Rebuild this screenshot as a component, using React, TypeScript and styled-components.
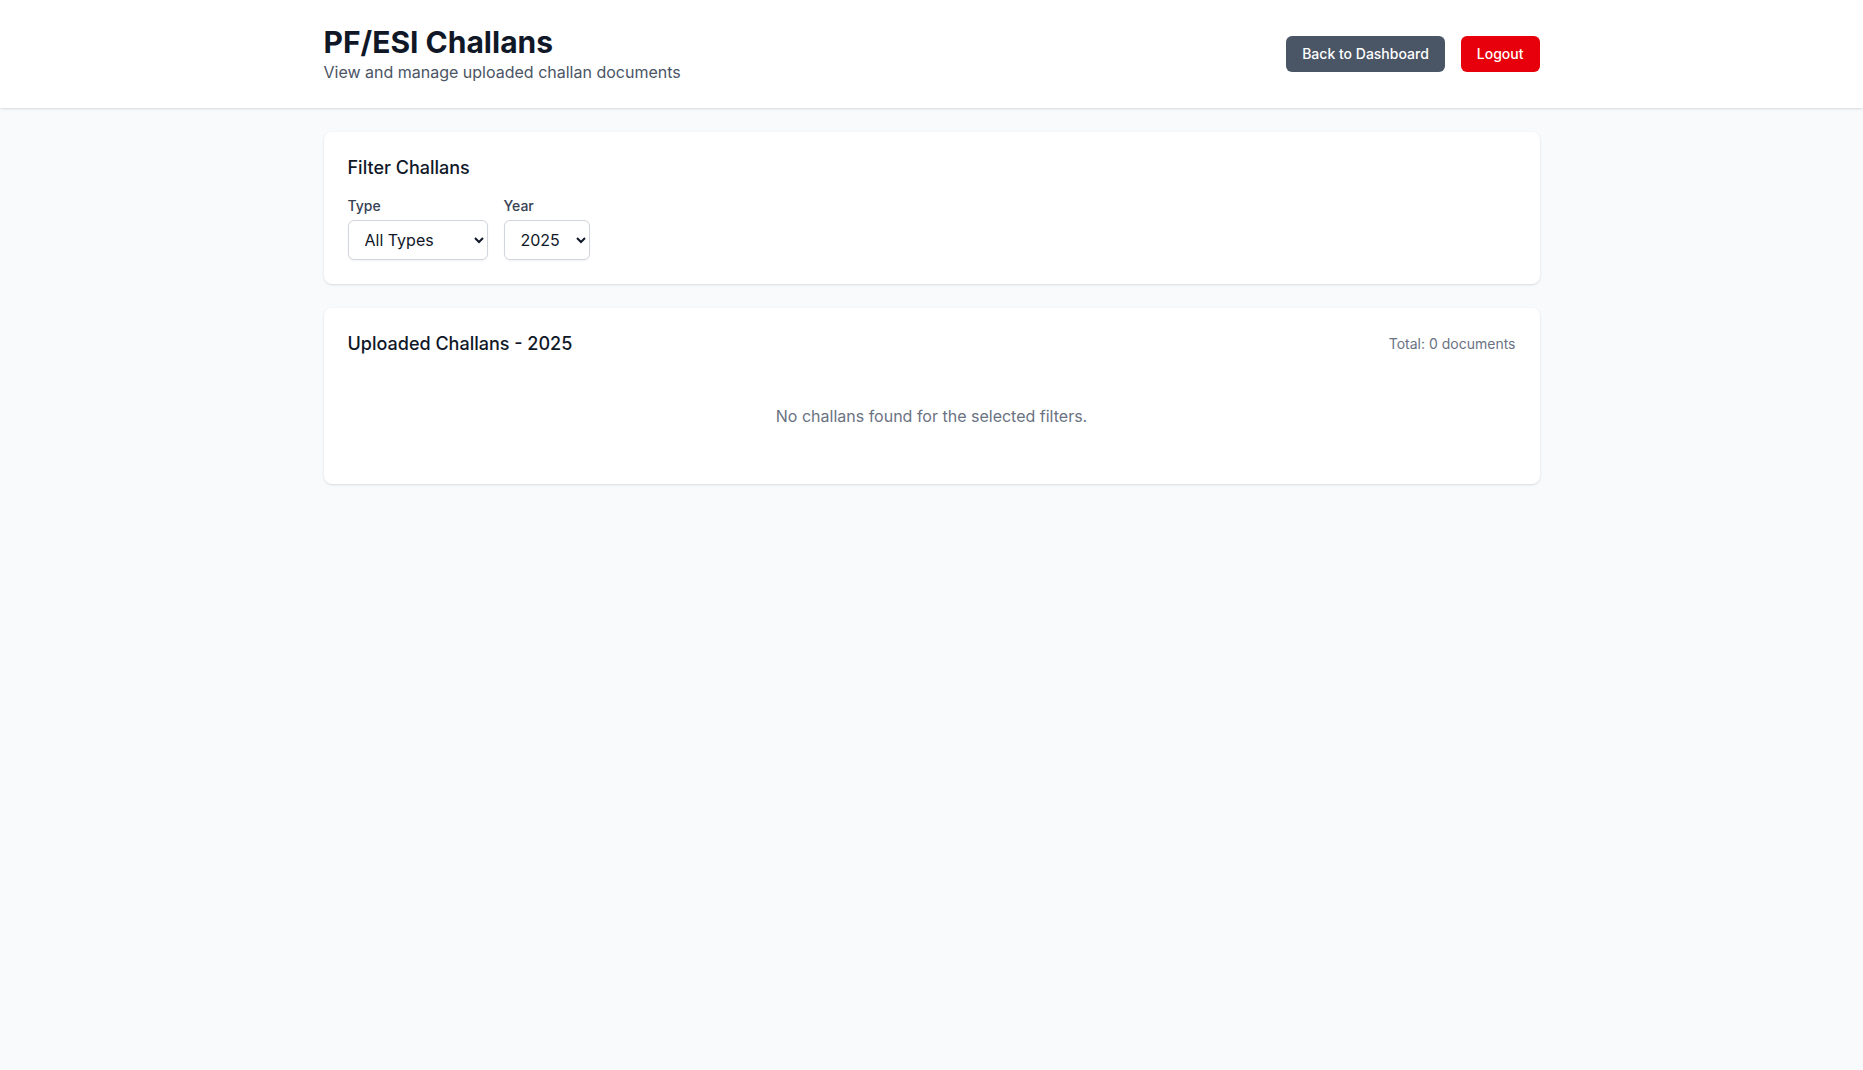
import React from "react";
import styled, { createGlobalStyle } from "styled-components";

const GlobalStyle = createGlobalStyle`
  * { box-sizing: border-box; }
  html, body { margin: 0; padding: 0; }
  body {
    background: #f9fafb;
    font-family: Inter, "Noto Sans", sans-serif;
    color: #101828;
    min-height: 100vh;
  }
`;

const Page = styled.div`
  min-height: 100vh;
  background: #f9fafb;
`;

const Header = styled.header`
  background: #ffffff;
  box-shadow: 0 1px 3px 0 rgba(0, 0, 0, 0.1), 0 1px 2px -1px rgba(0, 0, 0, 0.1);
`;

const Container = styled.div`
  max-width: 1280px;
  margin: 0 auto;
  padding: 0 32px;
`;

const HeaderInner = styled(Container)`
  display: flex;
  align-items: center;
  justify-content: space-between;
  padding-top: 24px;
  padding-bottom: 24px;
`;

const Title = styled.h1`
  margin: 0;
  font-size: 30px;
  line-height: 36px;
  font-weight: 700;
  color: #101828;
`;

const Subtitle = styled.p`
  margin: 0;
  font-size: 16px;
  line-height: 24px;
  color: #4a5565;
`;

const Actions = styled.div`
  display: flex;
  gap: 16px;
`;

const Button = styled.button<{ $variant: "gray" | "red" }>`
  height: 36px;
  padding: 0 16px 1px;
  border: none;
  border-radius: 6px;
  font-family: inherit;
  font-size: 14px;
  line-height: 20px;
  font-weight: 500;
  color: #ffffff;
  cursor: pointer;
  background: ${(p) => (p.$variant === "red" ? "#e7000b" : "#4a5565")};
`;

const Main = styled(Container)`
  padding-top: 24px;
  padding-bottom: 24px;
  display: flex;
  flex-direction: column;
  gap: 24px;
`;

const Card = styled.section`
  background: #ffffff;
  border-radius: 8px;
  box-shadow: 0 1px 3px 0 rgba(0, 0, 0, 0.1), 0 1px 2px -1px rgba(0, 0, 0, 0.1);
  padding: 24px;
`;

const CardTitle = styled.h2<{ $mb?: number }>`
  margin: 0 0 ${(p) => p.$mb ?? 16}px 0;
  font-size: 18px;
  line-height: 24px;
  font-weight: 500;
  color: #101828;
`;

const FilterRow = styled.div`
  display: flex;
  gap: 16px;
`;

const Field = styled.div`
  display: flex;
  flex-direction: column;
  gap: 4px;
`;

const Label = styled.label`
  font-size: 14px;
  line-height: 20px;
  font-weight: 500;
  color: #364153;
`;

const Select = styled.select<{ $width: number }>`
  width: ${(p) => p.$width}px;
  height: 40px;
  padding: 0 8px 0 12px;
  border: 1px solid #d1d5dc;
  border-radius: 6px;
  background: #ffffff;
  font-family: inherit;
  font-size: 16px;
  color: #101828;
  box-shadow: 0 1px 2px 0 rgba(0, 0, 0, 0.05);
`;

const CardHead = styled.div`
  display: flex;
  align-items: center;
  justify-content: space-between;
  margin-bottom: 16px;
`;

const Total = styled.span`
  font-size: 14px;
  line-height: 20px;
  color: #6a7282;
`;

const Empty = styled.p`
  margin: 0;
  padding: 32px 0;
  text-align: center;
  font-size: 16px;
  line-height: 24px;
  color: #6a7282;
`;

export default function App() {
  return (
    <Page>
      <GlobalStyle />
      <Header>
        <HeaderInner>
          <div>
            <Title>PF/ESI Challans</Title>
            <Subtitle>View and manage uploaded challan documents</Subtitle>
          </div>
          <Actions>
            <Button $variant="gray">Back to Dashboard</Button>
            <Button $variant="red">Logout</Button>
          </Actions>
        </HeaderInner>
      </Header>
      <Main as="main">
        <Card>
          <CardTitle>Filter Challans</CardTitle>
          <FilterRow>
            <Field>
              <Label>Type</Label>
              <Select defaultValue="all" $width={140}>
                <option value="all">All Types</option>
                <option value="pf">PF</option>
                <option value="esi">ESI</option>
              </Select>
            </Field>
            <Field>
              <Label>Year</Label>
              <Select defaultValue="2025" $width={86}>
                <option value="2025">2025</option>
                <option value="2024">2024</option>
                <option value="2023">2023</option>
              </Select>
            </Field>
          </FilterRow>
        </Card>
        <Card>
          <CardHead>
            <CardTitle $mb={0}>Uploaded Challans - 2025</CardTitle>
            <Total>Total: 0 documents</Total>
          </CardHead>
          <Empty>No challans found for the selected filters.</Empty>
        </Card>
      </Main>
    </Page>
  );
}
